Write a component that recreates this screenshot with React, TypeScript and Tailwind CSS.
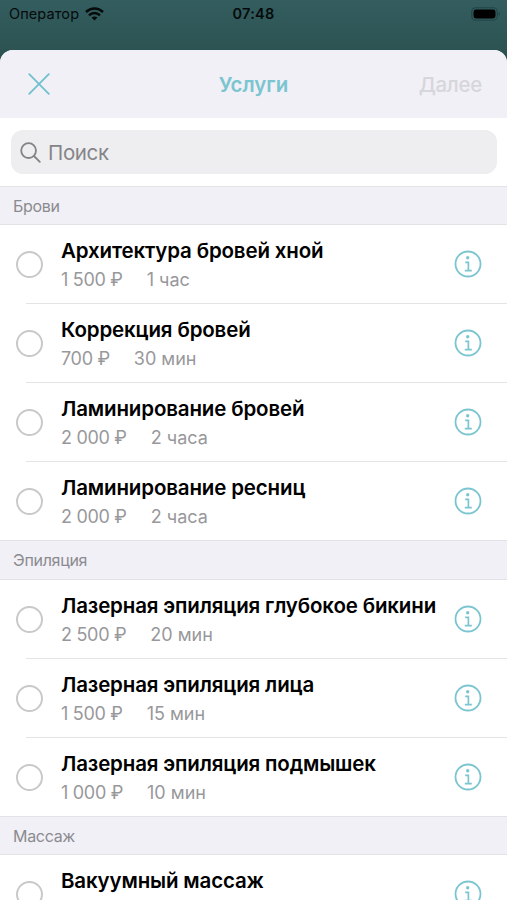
import React, { useState } from 'react';

interface Service {
  name: string;
  price?: string;
  duration?: string;
}

interface ServiceGroup {
  title: string;
  services: Service[];
}

const groups: ServiceGroup[] = [
  {
    title: 'Брови',
    services: [
      { name: 'Архитектура бровей хной', price: '1 500 ₽', duration: '1 час' },
      { name: 'Коррекция бровей', price: '700 ₽', duration: '30 мин' },
      { name: 'Ламинирование бровей', price: '2 000 ₽', duration: '2 часа' },
      { name: 'Ламинирование ресниц', price: '2 000 ₽', duration: '2 часа' },
    ],
  },
  {
    title: 'Эпиляция',
    services: [
      { name: 'Лазерная эпиляция глубокое бикини', price: '2 500 ₽', duration: '20 мин' },
      { name: 'Лазерная эпиляция лица', price: '1 500 ₽', duration: '15 мин' },
      { name: 'Лазерная эпиляция подмышек', price: '1 000 ₽', duration: '10 мин' },
    ],
  },
  {
    title: 'Массаж',
    services: [{ name: 'Вакуумный массаж' }],
  },
];

function WifiIcon() {
  return (
    <svg width="19" height="14" viewBox="0 0 19 14" fill="none" stroke="#050a0a" strokeWidth="2.5">
      <path d="M1 5C5.8.4 13.2.4 18 5" />
      <path d="M4 8.3c3.2-3 7.8-3 11 0" />
      <path d="M9.5 13.4 6.6 10.6c1.7-1.5 4.1-1.5 5.8 0z" fill="#050a0a" stroke="none" />
    </svg>
  );
}

function BatteryIcon() {
  return (
    <svg width="30" height="14" viewBox="0 0 30 14">
      <rect x="0.75" y="0.75" width="25.5" height="12.5" rx="4" fill="none" stroke="#234444" strokeWidth="1.2" />
      <rect x="2.5" y="2.5" width="22" height="9" rx="2.4" fill="#000" />
      <path d="M27.7 4.8c1.7.8 1.7 3.6 0 4.4z" fill="#234444" />
    </svg>
  );
}

function InfoIcon() {
  return (
    <svg width="28" height="28" viewBox="0 0 28 28" fill="none" stroke="#7bc5d0">
      <circle cx="14" cy="14" r="12.5" strokeWidth="1.8" />
      <circle cx="13.7" cy="7.8" r="1.7" fill="#7bc5d0" stroke="none" />
      <path d="M11.2 12.3h3.2v8.2M10.8 20.6h7" strokeWidth="1.7" />
    </svg>
  );
}

function StatusBar() {
  return (
    <div className="grid h-[50px] shrink-0 grid-cols-3 items-start px-[9px] pt-[5px] text-[#050a0a]">
      <div className="flex items-center gap-[6px]">
        <span className="text-[14.5px] leading-[18px] tracking-[0.1px]">Оператор</span>
        <WifiIcon />
      </div>
      <span className="text-center text-[14.5px] leading-[18px] font-semibold tracking-[0.3px]">07:48</span>
      <div className="mr-[-3px] flex justify-end pt-[1.5px]">
        <BatteryIcon />
      </div>
    </div>
  );
}

function ServiceRow({ service, last }: { service: Service; last: boolean }) {
  const [checked, setChecked] = useState(false);

  return (
    <div className="flex h-[79px] pl-[16px]">
      <button
        onClick={() => setChecked(!checked)}
        className={`mt-[27px] size-[27px] shrink-0 rounded-full border-2 border-[#c9c9cb] ${checked ? 'bg-[#7bc5d0]' : ''}`}
      />
      <div className="relative ml-[18px] flex flex-1 pr-[25px]">
        <div className="flex-1 pt-[14px] whitespace-nowrap">
          <div className="text-[20.5px] leading-[26px] font-semibold tracking-[-0.15px] text-black">{service.name}</div>
          {service.price && (
            <div className="mt-[4px] flex gap-[24px] text-[18px] leading-[24px] text-[#98989b]">
              <span className="tracking-[-0.3px]">{service.price}</span>
              <span>{service.duration}</span>
            </div>
          )}
        </div>
        <button className="mt-[26px] size-[28px] shrink-0">
          <InfoIcon />
        </button>
        {!last && <div className="absolute right-0 -bottom-px left-[-35px] h-px bg-[#e4e4e6]" />}
      </div>
    </div>
  );
}

export default function App() {
  return (
    <div className="flex h-[900px] w-[507px] flex-col overflow-hidden bg-linear-to-b from-[#345d60] from-0% to-[#2b5250] to-[56px] font-['Inter','Liberation_Sans',sans-serif]">
      <StatusBar />
      <div className="flex min-h-0 flex-1 flex-col overflow-hidden rounded-t-[13px] bg-white">
        <header className="grid h-[68px] shrink-0 grid-cols-3 items-center bg-[#f1f0f6] pr-[25px] pl-[28px]">
          <button className="justify-self-start">
            <svg width="22" height="22" viewBox="0 0 22 22" stroke="#70c1ce" strokeWidth="1.8" strokeLinecap="round">
              <path d="M1.2 1.2 20.8 20.8M20.8 1.2 1.2 20.8" />
            </svg>
          </button>
          <h1 className="mr-[3px] pt-[2px] text-center text-[20.5px] font-semibold text-[#7bc5d0]">Услуги</h1>
          <button className="justify-self-end pt-[2px] text-[20.5px] font-medium tracking-[-0.3px] text-[#d6d6db]">Далее</button>
        </header>

        <div className="h-[67.5px] shrink-0 pt-[12px] pr-[10px] pl-[11px]">
          <div className="flex h-[44px] items-center gap-[7px] rounded-[12px] bg-[#eeeef0] pl-[9px]">
            <svg width="21" height="21" viewBox="0 0 21 21" fill="none" stroke="#838387" strokeWidth="1.8" strokeLinecap="round">
              <circle cx="8.6" cy="8.6" r="7.4" />
              <path d="m14 14 5.8 5.8" />
            </svg>
            <span className="pt-[3px] text-[20.5px] tracking-[-0.35px] text-[#858589]">Поиск</span>
          </div>
        </div>

        {groups.map((group) => (
          <section key={group.title} className="shrink-0">
            <h2 className="flex h-[39.5px] items-center border-y border-[#e3e3e7] bg-[#f1f0f6] pt-px pl-[13px] text-[16px] tracking-[-0.3px] text-[#8b8b8f]">
              {group.title}
            </h2>
            <div className="-mt-px">
              {group.services.map((service, i) => (
                <ServiceRow key={service.name} service={service} last={i === group.services.length - 1} />
              ))}
            </div>
          </section>
        ))}
      </div>
    </div>
  );
}
